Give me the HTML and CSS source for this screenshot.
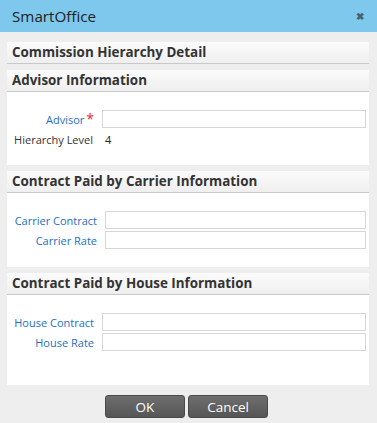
FILE: index.html
```html
<!DOCTYPE html>
<html lang="en">
<head>
  <meta charset="UTF-8">
  <meta name="viewport" content="width=device-width, initial-scale=1.0">
  <title>SmartOffice</title>
  <link rel="stylesheet" href="styles.css">
</head>
<body>
  <div class="titlebar">
    <span class="title">SmartOffice</span>
    <span class="close">&#x2716;</span>
  </div>

  <div class="content">
    <div class="section">
      <div class="section-header">Commission Hierarchy Detail</div>
    </div>

    <div class="section">
      <div class="section-header">Advisor Information</div>
      <div class="section-body advisor">
        <div class="form-row">
          <label class="label">Advisor<span class="req">*</span></label>
          <input class="field" type="text">
        </div>
        <div class="form-row">
          <span class="label plain">Hierarchy Level</span>
          <span class="value">4</span>
        </div>
      </div>
    </div>

    <div class="section">
      <div class="section-header">Contract Paid by Carrier Information</div>
      <div class="section-body carrier">
        <div class="form-row">
          <label class="label">Carrier Contract</label>
          <input class="field" type="text">
        </div>
        <div class="form-row">
          <label class="label">Carrier Rate</label>
          <input class="field" type="text">
        </div>
      </div>
    </div>

    <div class="section">
      <div class="section-header">Contract Paid by House Information</div>
      <div class="section-body house">
        <div class="form-row">
          <label class="label">House Contract</label>
          <input class="field" type="text">
        </div>
        <div class="form-row">
          <label class="label">House Rate</label>
          <input class="field" type="text">
        </div>
      </div>
    </div>

    <div class="buttons">
      <button class="btn">OK</button>
      <button class="btn">Cancel</button>
    </div>
  </div>
</body>
</html>
```

FILE: styles.css
```css
* {
  margin: 0;
  padding: 0;
  box-sizing: border-box;
  font-family: "Open Sans", Arial, sans-serif;
}

body, html {
  width: 100%;
  height: 100%;
  overflow: hidden;
}

body {
  background: #eeeeee;
}

.titlebar {
  height: 32px;
  background: #7dc8ec;
  display: flex;
  align-items: center;
  justify-content: space-between;
  padding: 0 13px 0 12px;
}

.title {
  font-size: 15.2px;
  color: #222;
}

.close {
  font-size: 9.5px;
  color: #47606f;
  font-weight: bold;
}

.content {
  padding: 10px 8px 0 7px;
}

.section {
  margin-bottom: 6px;
}

.section-header {
  height: 22px;
  padding-left: 5px;
  line-height: 21px;
  font-size: 13.4px;
  font-weight: bold;
  color: #333;
  background: linear-gradient(#fbfbfb, #efefef);
  border-bottom: 1px solid #c9c9c9;
}

.section-body {
  background: #fff;
  padding: 18px 3px 17px 0;
  display: flex;
  flex-direction: column;
  gap: 2px;
}

.carrier {
  padding-bottom: 18px;
}

.house {
  padding-bottom: 34px;
}

.form-row {
  display: flex;
  align-items: center;
  height: 18px;
}

.label {
  width: 95px;
  flex-shrink: 0;
  padding-right: 8px;
  text-align: right;
  font-size: 11px;
  color: #1c6fc6;
}

.carrier .label {
  width: 98px;
}

.req {
  color: #e8262b;
  font-size: 14px;
  margin-left: 2px;
  line-height: 10px;
}

.plain {
  color: #333;
  padding-right: 9px;
}

.value {
  padding-left: 3px;
  font-size: 11px;
  color: #222;
}

.field {
  flex: 1;
  height: 18px;
  border: 1px solid #d6d6d6;
  background: #fff;
  outline: none;
}

.buttons {
  display: flex;
  justify-content: center;
  gap: 3px;
  padding-top: 4px;
  padding-right: 3px;
}

.btn {
  width: 80px;
  height: 23px;
  border: 1px solid #4a4a4a;
  border-radius: 3px;
  background: linear-gradient(#6e6e6e, #565656);
  color: #fff;
  font-size: 13.5px;
  cursor: pointer;
}
```
